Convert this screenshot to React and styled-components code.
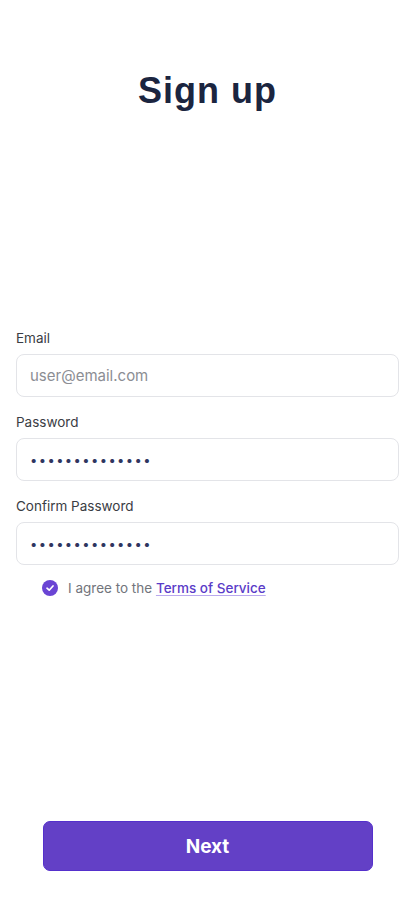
import React from "react";
import styled, { createGlobalStyle } from "styled-components";

const Global = createGlobalStyle`
  html, body { margin: 0; padding: 0; background: #ffffff; }
  body { font-family: Inter, "Liberation Sans", Arial, sans-serif; }
  * { box-sizing: border-box; }
`;

const Page = styled.div`
  min-height: 900px;
  display: flex;
  flex-direction: column;
  padding: 0 16px 29px;
`;

const Title = styled.h1`
  margin: 69px 0 0;
  text-align: center;
  font-family: "Liberation Sans", Arial, sans-serif;
  font-weight: 700;
  font-size: 36px;
  line-height: 44px;
  letter-spacing: 1px;
  color: #1b2540;
`;

const Form = styled.form`
  margin-top: 217px;
  display: flex;
  flex-direction: column;
  gap: 17px;
`;

const Field = styled.div`
  display: flex;
  flex-direction: column;
  gap: 7px;
`;

const Label = styled.label`
  font-size: 13.5px;
  line-height: 17px;
  color: #3a3d44;
`;

const Input = styled.input`
  height: 43px;
  width: 100%;
  border: 1px solid #e3e4e8;
  border-radius: 8px;
  padding: 0 13px;
  font-family: Inter, "Liberation Sans", Arial, sans-serif;
  font-size: ${(p) => (p.$secret ? "13px" : "15px")};
  color: ${(p) => (p.$secret ? "#2e3560" : "#333")};
  letter-spacing: ${(p) => (p.$secret ? "1.4px" : "0")};
  background: #fff;
  outline: none;
  &::placeholder { color: #8b8d93; }
`;

const Agree = styled.div`
  display: flex;
  align-items: center;
  gap: 10px;
  padding-left: 26px;
  margin-top: -2px;
  font-size: 13.5px;
  color: #72757c;
`;

const Check = styled.span`
  width: 16px;
  height: 16px;
  border-radius: 50%;
  background: #6a44d4;
  display: flex;
  align-items: center;
  justify-content: center;
  flex-shrink: 0;
`;

const Terms = styled.a`
  color: #5a3cc8;
  font-weight: 500;
  text-decoration: underline;
  text-decoration-color: #b9a9ee;
  text-underline-offset: 2px;
`;

const Spacer = styled.div`
  flex: 1;
`;

const Button = styled.button`
  align-self: center;
  width: 330px;
  height: 50px;
  border: 1px solid #5530cc;
  border-radius: 7px;
  background: #6340c6;
  color: #fff;
  font-family: Inter, "Liberation Sans", Arial, sans-serif;
  font-weight: 700;
  font-size: 19px;
  cursor: pointer;
`;

export default function App() {
  return (
    <>
      <Global />
      <Page>
        <Title>Sign up</Title>
        <Form onSubmit={(e) => e.preventDefault()}>
          <Field>
            <Label>Email</Label>
            <Input placeholder="user@email.com" />
          </Field>
          <Field>
            <Label>Password</Label>
            <Input $secret readOnly value={"\u2022".repeat(14)} />
          </Field>
          <Field>
            <Label>Confirm Password</Label>
            <Input $secret readOnly value={"\u2022".repeat(14)} />
          </Field>
          <Agree>
            <Check>
              <svg width="10" height="10" viewBox="0 0 10 10">
                <path d="M2 5.2 L4.2 7.2 L8 3" fill="none" stroke="#fff" strokeWidth="1.7" strokeLinecap="round" strokeLinejoin="round" />
              </svg>
            </Check>
            <span>
              I agree to the <Terms href="#">Terms of Service</Terms>
            </span>
          </Agree>
        </Form>
        <Spacer />
        <Button>Next</Button>
      </Page>
    </>
  );
}
